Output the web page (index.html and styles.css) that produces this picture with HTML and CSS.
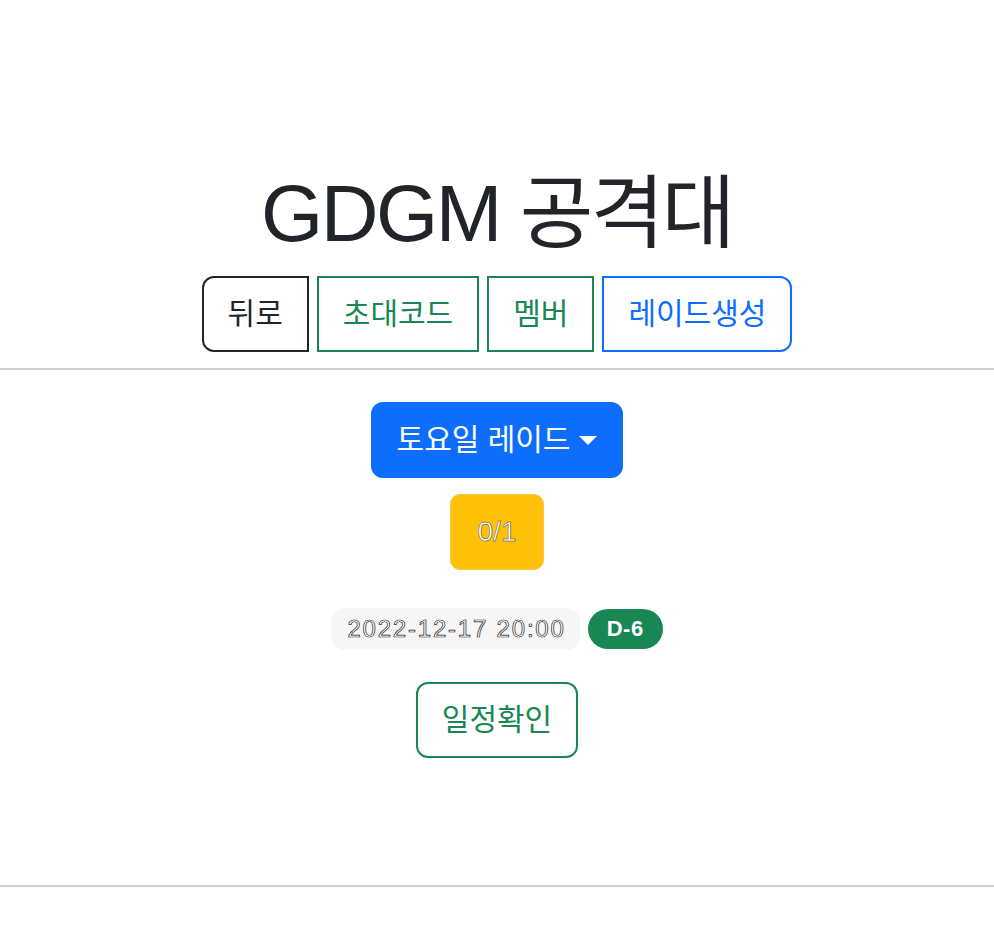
FILE: index.html
```html
<!DOCTYPE html>
<html lang="ko">
<head>
<meta charset="utf-8">
<title>GDGM 공격대</title>
<link rel="stylesheet" href="styles.css">
</head>
<body>
<header class="top">
  <h1 class="title">GDGM 공격대</h1>
  <nav class="actions">
    <button class="btn btn-dark-outline first">뒤로</button>
    <button class="btn btn-success-outline">초대코드</button>
    <button class="btn btn-success-outline">멤버</button>
    <button class="btn btn-primary-outline last">레이드생성</button>
  </nav>
</header>
<hr class="rule">
<main class="raid">
  <button class="btn btn-primary rounded dropdown">토요일 레이드<span class="caret"></span></button>
  <div class="count">0/1</div>
  <div class="when">
    <span class="date">2022-12-17 20:00</span>
    <span class="dday">D-6</span>
  </div>
  <button class="btn btn-success-outline rounded">일정확인</button>
</main>
<hr class="rule rule-bottom">
</body>
</html>
```

FILE: styles.css
```css
* { box-sizing: border-box; }

body {
  margin: 0;
  background: #fff;
  color: #212529;
  font-family: "Liberation Sans", "Noto Sans CJK KR", sans-serif;
}

.top {
  display: flex;
  flex-direction: column;
  align-items: center;
  padding-top: 166px;
}

.title {
  margin: 0;
  font-size: 80px;
  line-height: 96px;
  font-weight: 400;
  letter-spacing: -2.5px;
  color: #212529;
}

.actions {
  display: flex;
  gap: 8px;
  margin-top: 14px;
}

.btn {
  font-family: "Liberation Sans", "Noto Sans CJK KR", sans-serif;
  font-size: 30px;
  line-height: 42px;
  padding: 15px 24px;
  border: 2px solid transparent;
  background: #fff;
  border-radius: 0;
  display: inline-flex;
  align-items: center;
  cursor: pointer;
}

.btn.first { border-radius: 12px 0 0 12px; }
.btn.last { border-radius: 0 12px 12px 0; }
.btn.rounded { border-radius: 12px; }

.btn-dark-outline { color: #212529; border-color: #212529; }
.btn-success-outline { color: #198754; border-color: #198754; }
.btn-primary-outline { color: #0d6efd; border-color: #0d6efd; }
.btn-primary { color: #fff; background: #0d6efd; border-color: #0d6efd; }

.caret {
  display: inline-block;
  margin-left: 9px;
  width: 0;
  height: 0;
  border-top: 9px solid #fff;
  border-left: 9px solid transparent;
  border-right: 9px solid transparent;
}

.rule {
  margin: 16px 0 0;
  border: 0;
  border-top: 2px solid #cfcfcf;
}

.rule-bottom { margin-top: 127px; }

.raid {
  display: flex;
  flex-direction: column;
  align-items: center;
  padding-top: 32px;
}

.count {
  margin-top: 16px;
  width: 94px;
  height: 76px;
  display: flex;
  align-items: center;
  justify-content: center;
  background: #ffc107;
  border: 1px solid #f3c64a;
  border-radius: 10px;
  color: #fff;
  font-size: 28px;
  -webkit-text-stroke: 0.5px #333;
}

.when {
  display: flex;
  align-items: center;
  gap: 8px;
  margin-top: 38px;
  margin-bottom: 32px;
}

.date {
  display: inline-flex;
  align-items: center;
  height: 42px;
  padding: 0 14px 0 16px;
  background: #f6f6f6;
  border-radius: 14px;
  color: #fff;
  font-size: 24px;
  letter-spacing: 1.8px;
  -webkit-text-stroke: 0.7px #222;
}

.dday {
  display: inline-flex;
  align-items: center;
  height: 40px;
  padding: 0 19px;
  background: #198754;
  border-radius: 20px;
  color: #fff;
  font-size: 22px;
  font-weight: 700;
  letter-spacing: 0.5px;
}
```
